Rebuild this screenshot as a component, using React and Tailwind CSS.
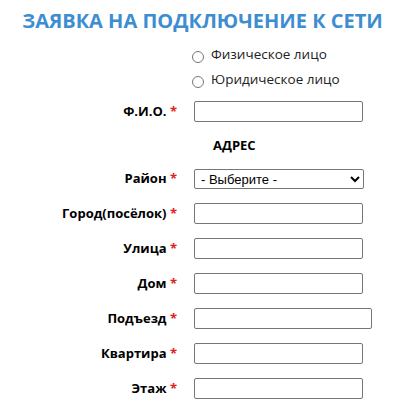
import React from "react";

const fields = [
  { label: "Город(посёлок)" },
  { label: "Улица" },
  { label: "Дом" },
  { label: "Подъезд", wide: true },
  { label: "Квартира" },
  { label: "Этаж" },
];

const Label = ({ children }) => (
  <div className="w-[177px] shrink-0 text-right text-[13px] font-bold text-black">
    {children} <span className="text-[#e0201c]">*</span>
  </div>
);

const TextInput = ({ wide }) => (
  <input
    type="text"
    className={
      "h-[21px] rounded-[2px] border border-[#767676] bg-white px-1 " +
      (wide ? "w-[178px]" : "w-[169px]")
    }
  />
);

export default function App() {
  return (
    <div className="w-[405px] h-[412px] overflow-hidden bg-white font-['Open_Sans',sans-serif]">
      <h1 className="pt-[6px] text-center text-[20px] font-bold leading-[30px] text-[#3d8dd1]">
        ЗАЯВКА НА ПОДКЛЮЧЕНИЕ К СЕТИ
      </h1>

      <div className="mt-[9px] flex flex-col gap-[7px] pl-[192px] text-[13.5px] text-[#222]">
        <label className="flex items-center gap-[7px] leading-[16px]">
          <input type="radio" name="type" className="m-0 mt-[6px] h-[12px] w-[12px]" />
          <span>Физическое лицо</span>
        </label>
        <label className="flex items-center gap-[7px] leading-[16px]">
          <input type="radio" name="type" className="m-0 mt-[6px] h-[12px] w-[12px]" />
          <span>Юридическое лицо</span>
        </label>
      </div>

      <div className="mt-[13px] flex items-center gap-[17px]">
        <Label>Ф.И.О.</Label>
        <TextInput />
      </div>

      <div className="mt-[14px] pl-[213px] text-[13px] font-bold leading-[18px] text-black">
        АДРЕС
      </div>

      <div className="mt-[15px] flex items-center gap-[17px]">
        <Label>Район</Label>
        <select className="h-[20px] w-[170px] rounded-[2px] border border-[#767676] bg-white pl-[2px] font-['Liberation_Sans',sans-serif] text-[13px] text-black">
          <option>- Выберите -</option>
        </select>
      </div>

      <div className="mt-[14px] flex flex-col gap-[14px]">
        {fields.map((f) => (
          <div key={f.label} className="flex items-center gap-[17px]">
            <Label>{f.label}</Label>
            <TextInput wide={f.wide} />
          </div>
        ))}
      </div>
    </div>
  );
}
